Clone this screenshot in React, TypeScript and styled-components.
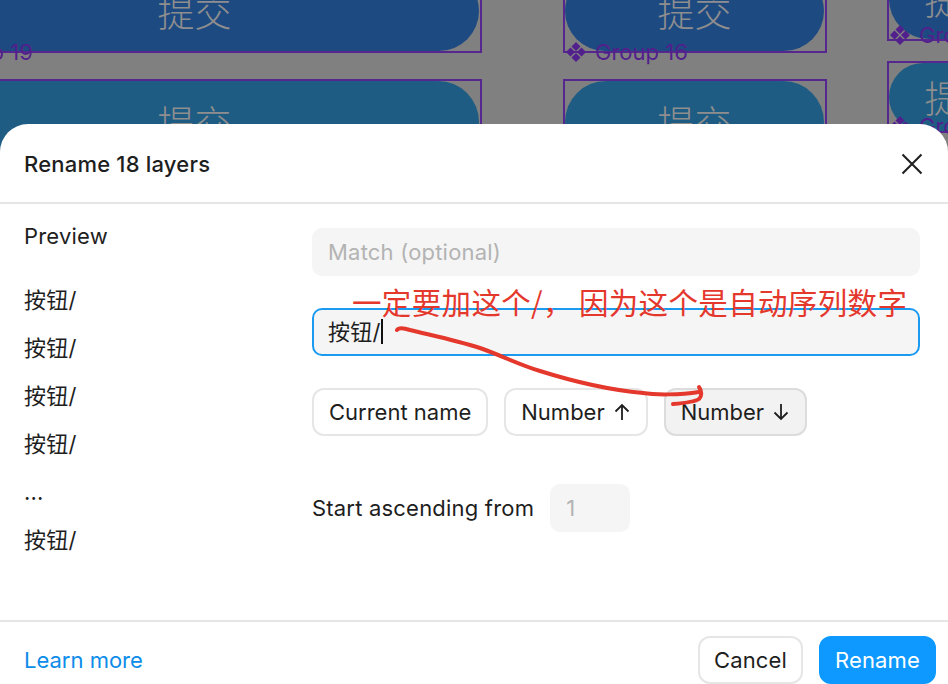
import styled, { createGlobalStyle } from "styled-components";

const GlobalStyle = createGlobalStyle`
  html, body {
    margin: 0;
    background: #808080;
  }
  body {
    font-family: Inter, "Noto Sans CJK SC", sans-serif;
    color: #1e1e1e;
    overflow: hidden;
  }
`;

const Page = styled.div`
  position: relative;
  width: 948px;
  height: 684px;
  overflow: hidden;
  display: flex;
  flex-direction: column;
`;

/* the Figma canvas behind the dialog */
const Canvas = styled.div`
  position: absolute;
  inset: 0;
  background: #808080;
`;

const Frame = styled.div<{ $x: number; $y: number; $w: number; $h: number }>`
  position: absolute;
  left: ${(p) => p.$x}px;
  top: ${(p) => p.$y}px;
  width: ${(p) => p.$w}px;
  height: ${(p) => p.$h}px;
  box-sizing: border-box;
  border: 2px solid #56288f;
  display: flex;
`;

const SubmitButton = styled.div<{ $tone: string }>`
  flex: 1;
  margin: 0 1px 0 0;
  border-radius: 44px;
  background: ${(p) => p.$tone};
  color: #8e8e8e;
  font-size: 37px;
  font-family: "Noto Sans CJK SC", sans-serif;
  font-weight: 300;
  display: flex;
  align-items: center;
  justify-content: center;
  line-height: 1;
`;

const GroupLabel = styled.div<{ $x: number; $y: number }>`
  position: absolute;
  left: ${(p) => p.$x}px;
  top: ${(p) => p.$y}px;
  display: flex;
  align-items: center;
  gap: 8px;
  color: #52208c;
  font-size: 22px;
  line-height: 26px;
  white-space: nowrap;
  svg {
    display: block;
    flex: none;
  }
`;

const Modal = styled.div`
  position: relative;
  margin-top: 124px;
  flex: 1;
  min-height: 0;
  background: #fff;
  border-radius: 28px 28px 0 0;
  display: flex;
  flex-direction: column;
  letter-spacing: 0.2px;
`;

const Header = styled.div`
  height: 78px;
  flex: none;
  border-bottom: 2px solid #e6e6e6;
  display: flex;
  align-items: center;
  justify-content: space-between;
  padding: 0 24px;
`;

const Title = styled.div`
  font-size: 22px;
  font-weight: 500;
  position: relative;
  top: 1px;
`;

const CloseButton = styled.div`
  display: flex;
  margin-right: 1px;
  position: relative;
  top: 1px;
`;

const Body = styled.div`
  flex: 1;
  display: grid;
  grid-template-columns: 288px 608px;
  padding: 24px 28px 0 24px;
  min-height: 0;
`;

const PreviewColumn = styled.div`
  display: flex;
  flex-direction: column;
`;

const PreviewHeading = styled.div`
  font-size: 22px;
  height: 24px;
  line-height: 16px;
  margin-bottom: 24px;
`;

const PreviewRow = styled.div`
  height: 48px;
  font-size: 22px;
  line-height: 48px;
`;

const Form = styled.div`
  display: flex;
  flex-direction: column;
`;

const Field = styled.div<{ $focused?: boolean }>`
  height: 48px;
  box-sizing: border-box;
  background: #f5f5f5;
  border-radius: 10px;
  border: 2px solid ${(p) => (p.$focused ? "#1b9bf0" : "#f5f5f5")};
  padding: 0 14px ${(p) => (p.$focused ? "4px" : "0")};
  display: flex;
  align-items: center;
  font-size: 22px;
  color: ${(p) => (p.$focused ? "#1e1e1e" : "#b3b3b3")};
  margin-bottom: 32px;
`;

const Caret = styled.span`
  display: inline-block;
  width: 2px;
  height: 25px;
  margin-top: 3px;
  background: #111;
`;

const TokenRow = styled.div`
  display: flex;
  gap: 16px;
  margin-bottom: 48px;
`;

const Token = styled.div<{ $active?: boolean }>`
  height: 48px;
  box-sizing: border-box;
  padding: 0 15px;
  border-radius: 12px;
  border: 2px solid ${(p) => (p.$active ? "#dcdcdc" : "#e6e6e6")};
  background: ${(p) => (p.$active ? "#f2f2f2" : "#fff")};
  font-size: 22px;
  letter-spacing: 0;
  display: flex;
  align-items: center;
  gap: 9px;
  white-space: nowrap;
  svg {
    margin-right: 1px;
  }
`;

const StartRow = styled.div`
  display: flex;
  align-items: center;
  gap: 16px;
  font-size: 22px;
`;

const StartInput = styled.div`
  width: 80px;
  height: 48px;
  box-sizing: border-box;
  padding-left: 16px;
  border-radius: 10px;
  background: #f5f5f5;
  color: #b3b3b3;
  display: flex;
  align-items: center;
`;

const Footer = styled.div`
  flex: none;
  height: 62px;
  border-top: 2px solid #e6e6e6;
  display: flex;
  align-items: flex-end;
  justify-content: space-between;
  padding: 0 12px 0 24px;
`;

const LearnMore = styled.a`
  color: #0d8ce9;
  font-size: 22px;
  line-height: 48px;
  letter-spacing: 0;
`;

const FooterActions = styled.div`
  display: flex;
  gap: 16px;
`;

const FooterButton = styled.div<{ $primary?: boolean }>`
  height: 48px;
  box-sizing: border-box;
  padding: 0 14px;
  border-radius: 12px;
  font-size: 22px;
  letter-spacing: 0.15px;
  display: flex;
  align-items: center;
  border: 2px solid ${(p) => (p.$primary ? "#0d99ff" : "#e6e6e6")};
  background: ${(p) => (p.$primary ? "#0d99ff" : "#fff")};
  color: ${(p) => (p.$primary ? "#fff" : "#1e1e1e")};
`;

/* red markup someone drew on top of the screenshot */
const Annotation = styled.div`
  position: absolute;
  left: 352px;
  top: 280px;
  color: #e5382d;
  font-family: "Noto Sans CJK SC", sans-serif;
  font-size: 29.5px;
  line-height: 42px;
  letter-spacing: 0.35px;
  white-space: nowrap;
  span {
    margin-right: 6px;
  }
`;

const Scribble = styled.svg`
  position: absolute;
  left: 0;
  top: 0;
  pointer-events: none;
`;

function ComponentIcon() {
  return (
    <svg width="22" height="22" viewBox="0 0 22 22" fill="currentColor">
      <path d="M11 1l4.5 4.5L11 10 6.5 5.5zM11 12l4.5 4.5L11 21l-4.5-4.5zM5.5 6.5L10 11l-4.5 4.5L1 11zM16.5 6.5L21 11l-4.5 4.5L12 11z" />
    </svg>
  );
}

function ArrowUp() {
  return (
    <svg width="16" height="18" viewBox="0 0 16 18" fill="none" stroke="#1e1e1e" strokeWidth="1.8">
      <path d="M8 17V2M1.5 8.5L8 2l6.5 6.5" />
    </svg>
  );
}

function ArrowDown() {
  return (
    <svg width="16" height="18" viewBox="0 0 16 18" fill="none" stroke="#1e1e1e" strokeWidth="1.8">
      <path d="M8 1v15M1.5 9.5L8 16l6.5-6.5" />
    </svg>
  );
}

const previewNames = ["按钮/", "按钮/", "按钮/", "按钮/", "...", "按钮/"];

export default function App() {
  return (
    <>
      <GlobalStyle />
      <Page>
        <Canvas>
          <Frame $x={-92} $y={-31} $w={574} $h={84}>
            <SubmitButton $tone="#1e4a82">提交</SubmitButton>
          </Frame>
          <Frame $x={563} $y={-31} $w={264} $h={84}>
            <SubmitButton $tone="#1e4a82">提交</SubmitButton>
          </Frame>
          <Frame $x={887} $y={-43} $w={150} $h={84}>
            <SubmitButton $tone="#1e4a82">提交</SubmitButton>
          </Frame>
          <Frame $x={-92} $y={79} $w={574} $h={86}>
            <SubmitButton $tone="#1f5c84">提交</SubmitButton>
          </Frame>
          <Frame $x={563} $y={79} $w={264} $h={86}>
            <SubmitButton $tone="#1f5c84">提交</SubmitButton>
          </Frame>
          <Frame $x={887} $y={61} $w={150} $h={72}>
            <SubmitButton $tone="#1f5c84">提交</SubmitButton>
          </Frame>
          <GroupLabel $x={-90} $y={39}>
            <ComponentIcon />
            Group 19
          </GroupLabel>
          <GroupLabel $x={565} $y={39}>
            <ComponentIcon />
            Group 16
          </GroupLabel>
          <GroupLabel $x={889} $y={22}>
            <ComponentIcon />
            Group 17
          </GroupLabel>
          <GroupLabel $x={889} $y={113}>
            <ComponentIcon />
            Group 18
          </GroupLabel>
        </Canvas>

        <Modal>
          <Header>
            <Title>Rename 18 layers</Title>
            <CloseButton>
              <svg width="22" height="22" viewBox="0 0 22 22" fill="none" stroke="#1e1e1e" strokeWidth="2">
                <path d="M1.5 1.5l19 19M20.5 1.5l-19 19" />
              </svg>
            </CloseButton>
          </Header>
          <Body>
            <PreviewColumn>
              <PreviewHeading>Preview</PreviewHeading>
              {previewNames.map((name, i) => (
                <PreviewRow key={i}>{name}</PreviewRow>
              ))}
            </PreviewColumn>
            <Form>
              <Field>Match (optional)</Field>
              <Field $focused>
                按钮/
                <Caret />
              </Field>
              <TokenRow>
                <Token>Current name</Token>
                <Token>
                  Number
                  <ArrowUp />
                </Token>
                <Token $active>
                  Number
                  <ArrowDown />
                </Token>
              </TokenRow>
              <StartRow>
                Start ascending from
                <StartInput>1</StartInput>
              </StartRow>
            </Form>
          </Body>
          <Footer>
            <LearnMore>Learn more</LearnMore>
            <FooterActions>
              <FooterButton>Cancel</FooterButton>
              <FooterButton $primary>Rename</FooterButton>
            </FooterActions>
          </Footer>
        </Modal>

        <Annotation>
          一定要加这个/<span>，</span>因为这个是自动序列数字
        </Annotation>
        <Scribble width="948" height="684" viewBox="0 0 948 684" fill="none" stroke="#e5382d" strokeLinecap="round" strokeLinejoin="round">
          <path
            strokeWidth="4"
            d="M397 330C399 327 404 328 410 330C430 335 455 340 480 348C500 355 520 365 540 371C575 382 610 390 643 393C655 395 680 395 699 392"
          />
          <path strokeWidth="4" d="M699 387C702 391 702 396 699 399C695 402 685 403 673 404" />
        </Scribble>
      </Page>
    </>
  );
}
